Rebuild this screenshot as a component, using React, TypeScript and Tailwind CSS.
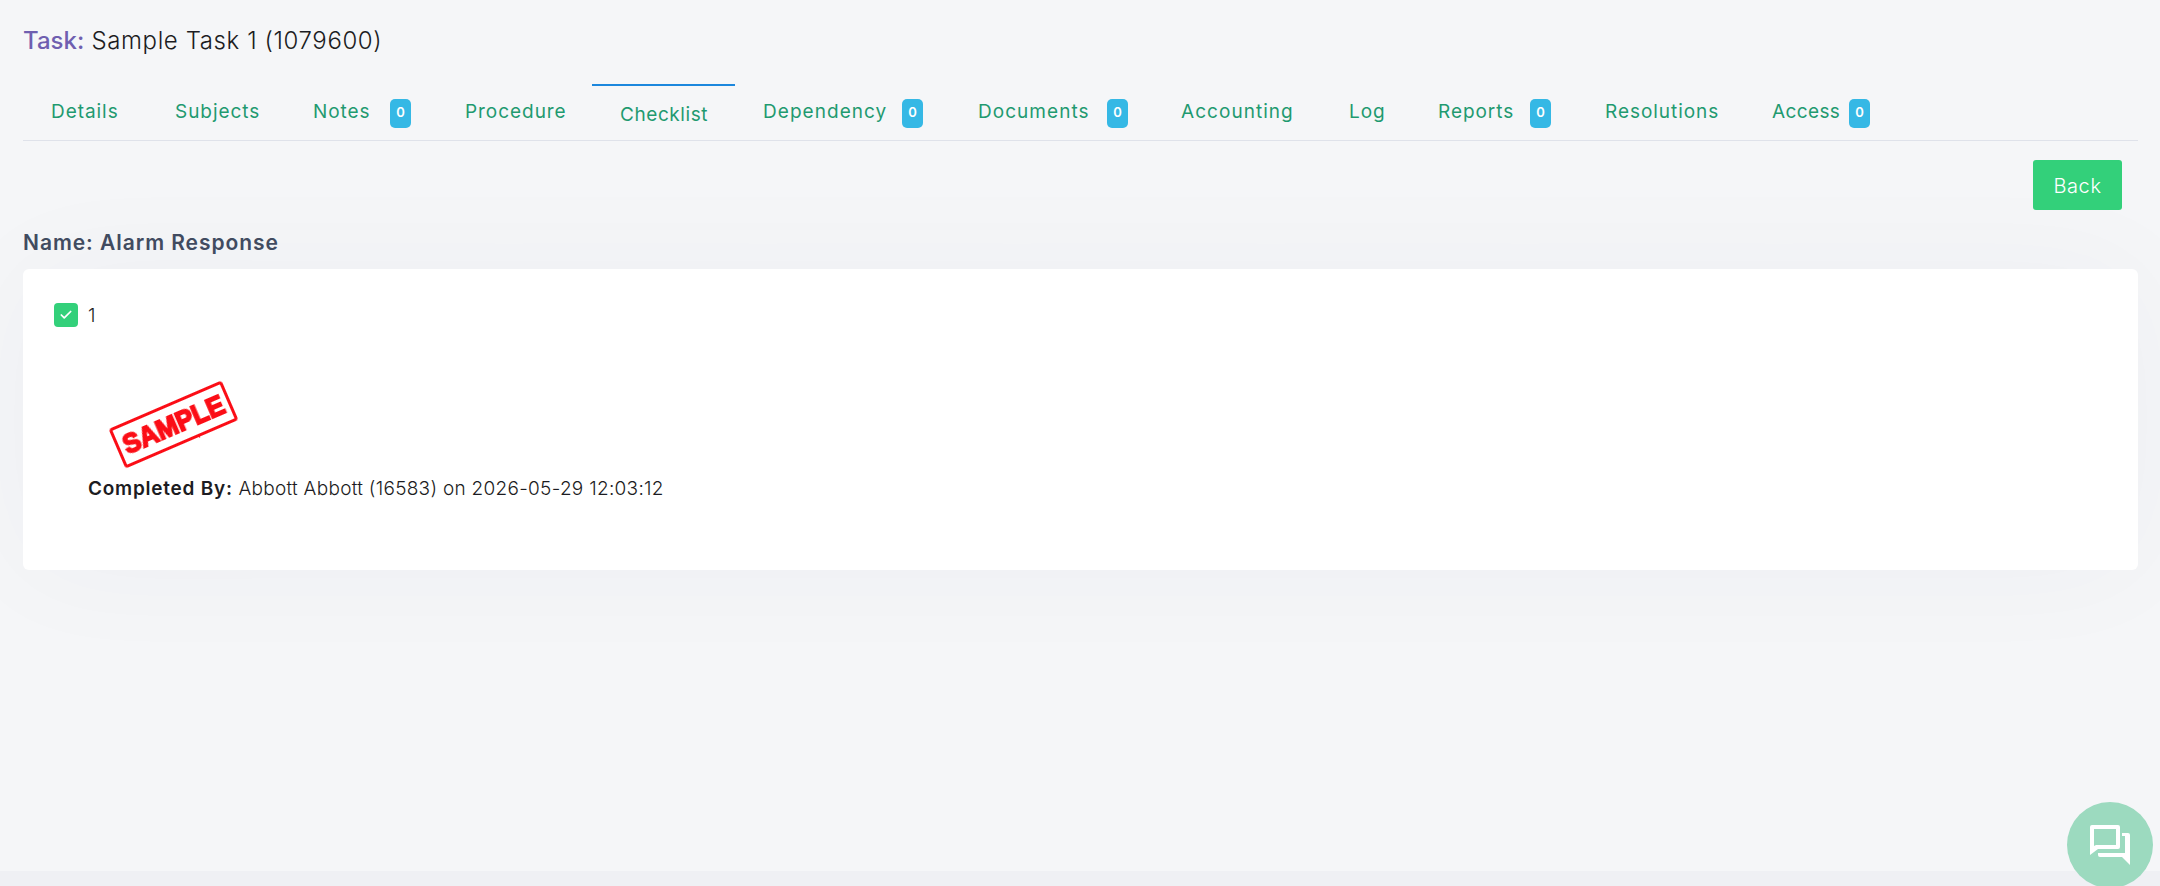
import { Check } from 'lucide-react';

const tabs = [
  { label: 'Details', box: 'w-[124px] pr-[27px] tracking-[0.05em]' },
  { label: 'Subjects', box: 'w-[138px] pr-[27px] tracking-[0.05em]' },
  { label: 'Notes', box: 'w-[152px] pr-[26px] tracking-[0.05em]', badge: 0 },
  { label: 'Procedure', box: 'w-[155px] pr-[27px] tracking-[0.05em]' },
  { label: 'Checklist', box: 'w-[143px] pr-[27px] tracking-[0.03em]', active: true },
  { label: 'Dependency', box: 'w-[215px] pr-[27px] tracking-[0.055em]', badge: 0 },
  { label: 'Documents', box: 'w-[203px] pr-[25px] tracking-[0.055em]', badge: 0 },
  { label: 'Accounting', box: 'w-[168px] pr-[27px] tracking-[0.055em]' },
  { label: 'Log', box: 'w-[89px] pr-[27px] tracking-[0.05em]' },
  { label: 'Reports', box: 'w-[167px] pr-[26px] tracking-[0.05em]', badge: 0 },
  { label: 'Resolutions', box: 'w-[167px] pr-[27px] tracking-[0.05em]' },
  { label: 'Access', box: 'w-[153px] pr-[27px] tracking-[0.02em]', badge: 0 },
];

function SampleStamp() {
  return (
    <svg width="127" height="85" viewBox="0 0 127 85" className="overflow-visible">
      <defs>
        <filter id="rough" x="-5%" y="-5%" width="110%" height="110%">
          <feTurbulence type="fractalNoise" baseFrequency="0.5" numOctaves="2" seed="4" result="n" />
          <feDisplacementMap in="SourceGraphic" in2="n" scale="1.6" />
          <feGaussianBlur stdDeviation="0.35" />
        </filter>
      </defs>
      <g transform="rotate(-23.3 63.5 42.5)" filter="url(#rough)">
        <rect x="3.5" y="22.5" width="120" height="40" rx="2" fill="none" stroke="#fb0d14" strokeWidth="3" />
        <text
          x="63.5"
          y="52.5"
          textAnchor="middle"
          textLength="108"
          lengthAdjust="spacingAndGlyphs"
          fontFamily="'Liberation Sans', sans-serif"
          fontWeight="700"
          fontSize="28"
          fill="#fb0d14"
          stroke="#fb0d14"
          strokeWidth="1.8"
        >
          SAMPLE
        </text>
      </g>
    </svg>
  );
}

function ChatIcon() {
  return (
    <svg width="40" height="40" viewBox="0 0 40 40" fill="#fff">
      <path
        fillRule="evenodd"
        d="M2 0H28a2 2 0 0 1 2 2V22a2 2 0 0 1-2 2H8L0 30V2a2 2 0 0 1 2-2ZM4 4V21L6 20H26V4Z"
      />
      <path d="M32 8H38a2 2 0 0 1 2 2V40L32 32H10a2 2 0 0 1-2-2V28H35V11H32Z" />
    </svg>
  );
}

export default function App() {
  return (
    <div className="relative flex h-[886px] flex-col overflow-hidden bg-[#f5f6f8] font-['Inter',sans-serif] text-[#1c1c22]">
      <div className="flex-1 pl-[23px] pr-[22px] pt-[25px]">
        {/* Title */}
        <h1 className="text-[24px] leading-[32px] font-light tracking-[0.025em]">
          <span className="font-medium tracking-normal text-[#6f5fb0]">Task:</span> Sample Task 1 (1079600)
        </h1>

        {/* Tabs */}
        <div className="mt-[28px] flex h-[56px] border-b border-[#dfe2ea]">
          {tabs.map((tab) => (
            <div
              key={tab.label}
              className={`${tab.box} flex items-center justify-between pl-[28px] text-[19px] text-[#1f9a70] ${
                tab.active ? 'border-t-2 border-[#1c87dd] pt-[5px] -mt-px pl-[27px]' : ''
              }`}
            >
              <span>{tab.label}</span>
              {tab.badge !== undefined && (
                <span className="mt-px flex h-[29px] w-[21px] items-center justify-center rounded-[5px] bg-[#35b8e5] text-[13px] font-semibold tracking-normal text-white">
                  {tab.badge}
                </span>
              )}
            </div>
          ))}
        </div>

        <div className="mt-[19px] flex justify-end pr-[16px]">
          <button className="h-[50px] w-[89px] rounded-[3px] bg-[#33d07a] pt-px text-[20px] font-light tracking-[0.03em] text-white">Back</button>
        </div>

        <h2 className="mt-[19px] text-[21px] leading-[28px] font-semibold tracking-[0.045em] text-[#414b60]">Name: Alarm Response</h2>

        {/* Checklist card */}
        <div className="mt-[12px] h-[301px] rounded-[6px] bg-white pl-[31px] pt-[34px] shadow-[0_0_120px_rgba(40,50,80,0.035)]">
          <div className="flex h-[24px] items-center gap-[10px]">
            <span className="flex h-[24px] w-[24px] items-center justify-center rounded-[4px] bg-[#33d07a]">
              <Check size={14} strokeWidth={3} className="text-white" />
            </span>
            <span className="pt-[3px] text-[19px] font-light">1</span>
          </div>
          <div className="ml-[56px] mt-[55px]">
            <SampleStamp />
          </div>
          <p className="ml-[34px] mt-[7px] pt-px text-[19px] leading-[27px] font-light tracking-[0.015em]">
            <span className="font-semibold tracking-[0.04em]">Completed By:</span> Abbott Abbott (16583) on 2026-05-29 12:03:12
          </p>
        </div>
      </div>

      <div className="h-[15px] bg-[#eff0f4]" />

      <div className="absolute left-[2067px] top-[802px] flex h-[86px] w-[86px] items-center justify-center rounded-full bg-[#9cdabf]">
        <ChatIcon />
      </div>
    </div>
  );
}
